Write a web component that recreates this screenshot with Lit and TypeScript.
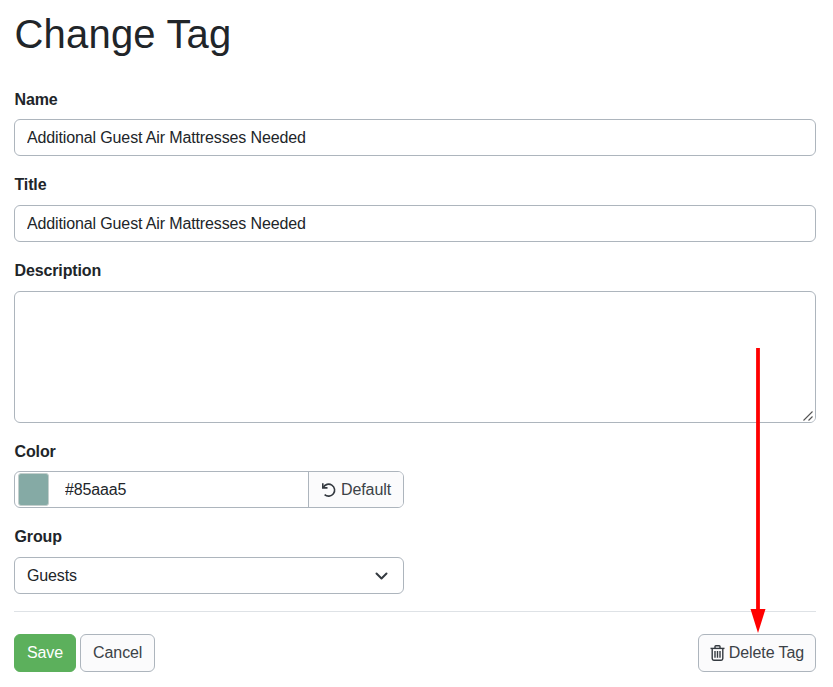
import { LitElement, html, css } from "lit";
import { customElement } from "lit/decorators.js";

@customElement("app-root")
export class AppRoot extends LitElement {
  static styles = css`
    :host {
      display: block;
      position: relative;
      height: 687px;
      overflow: hidden;
      background: #fff;
      font-family: "Liberation Sans", Arial, sans-serif;
      font-size: 16px;
      color: #212529;
    }
    * { box-sizing: border-box; }
    .page {
      width: 802px;
      margin-left: 14px;
      padding-top: 10px;
      display: flex;
      flex-direction: column;
    }
    h1 {
      margin: 0 0 32px;
      padding-left: 0.5px;
      font-size: 40px;
      font-weight: 400;
      line-height: 48px;
      letter-spacing: 0.2px;
    }
    label {
      display: block;
      font-weight: 700;
      line-height: 19px;
      margin-bottom: 10px;
      letter-spacing: -0.13px;
      padding-left: 0.5px;
    }
    label.up {
      margin-top: -1px;
      margin-bottom: 11px;
    }
    .field { margin-bottom: 20px; }
    .field.tall { margin-bottom: 19px; position: relative; }
    .field.small { width: 390px; }
    input, select, textarea {
      display: block;
      width: 100%;
      font: inherit;
      letter-spacing: -0.13px;
      color: #212529;
      background: #fff;
      border: 1px solid #adb5bd;
      border-radius: 6px;
      outline: none;
      margin: 0;
    }
    input.text, select {
      height: 37px;
      padding: 0 12px;
    }
    textarea {
      height: 132px;
      padding: 6px 12px;
      resize: vertical;
    }
    .grip {
      position: absolute;
      right: 1px;
      bottom: 1px;
      width: 13px;
      height: 13px;
      pointer-events: none;
      background: #fff;
      border-radius: 0 0 5px 0;
    }
    .group {
      display: flex;
      height: 37px;
      border: 1px solid #adb5bd;
      border-radius: 6px;
      overflow: hidden;
    }
    .swatch-wrap {
      flex: none;
      width: 38px;
      display: flex;
      align-items: center;
      padding-left: 3px;
    }
    .swatch {
      width: 31px;
      height: 33px;
      border-radius: 3px;
      background: #85aaa5;
      border: 1px solid #c4cfcd;
    }
    .group input {
      flex: 1;
      min-width: 0;
      border: 0;
      border-radius: 0;
      padding: 0 12px;
    }
    .default {
      flex: none;
      width: 95px;
      display: flex;
      align-items: center;
      justify-content: center;
      gap: 4px;
      border-left: 1px solid #adb5bd;
      color: #3c4247;
      background: #fbfbfc;
      letter-spacing: -0.1px;
    }
    .select-wrap { position: relative; }
    select { appearance: none; -webkit-appearance: none; }
    .chev {
      position: absolute;
      right: 16px;
      top: 15px;
      width: 13px;
      height: 8px;
      pointer-events: none;
    }
    hr {
      margin: -3px 0 22px;
      border: 0;
      border-top: 1px solid #dee2e6;
      width: 100%;
    }
    .actions {
      display: flex;
      align-items: center;
      gap: 4px;
    }
    button {
      height: 38px;
      padding: 0 12px;
      font: inherit;
      letter-spacing: -0.1px;
      border-radius: 6px;
      border: 1px solid #adb5bd;
      background: #fbfbfc;
      color: #3c4247;
      display: inline-flex;
      align-items: center;
      gap: 4px;
    }
    button.save {
      background: #5cb05c;
      border-color: #5cb05c;
      color: #fff;
    }
    button.delete { margin-left: auto; padding: 0 11px; }
    .arrow {
      position: absolute;
      left: 745px;
      top: 345px;
      width: 26px;
      height: 290px;
      pointer-events: none;
    }
  `;

  render() {
    return html`
      <div class="page">
        <h1>Change Tag</h1>
        <div class="field">
          <label>Name</label>
          <input class="text" .value=${"Additional Guest Air Mattresses Needed"} />
        </div>
        <div class="field">
          <label class="up">Title</label>
          <input class="text" .value=${"Additional Guest Air Mattresses Needed"} />
        </div>
        <div class="field tall">
          <label class="up">Description</label>
          <textarea></textarea>
          <svg class="grip" viewBox="0 0 13 13" fill="none" stroke="#555" stroke-width="1.1">
            <path d="M1.5 11.5 10.5 2.5M6.5 11.5 10.5 7.5"/>
          </svg>
        </div>
        <div class="field small">
          <label>Color</label>
          <div class="group">
            <div class="swatch-wrap"><div class="swatch"></div></div>
            <input .value=${"#85aaa5"} />
            <div class="default">
              <svg width="16" height="16" viewBox="0 0 16 16" fill="none" stroke="#343a40" stroke-width="1.6">
                <path d="M2.3 5.4A6 6 0 1 1 3.6 12.6"/>
                <path d="M1.8 1.2V5.9H6.5"/>
              </svg>
              Default
            </div>
          </div>
        </div>
        <div class="field small">
          <label class="up">Group</label>
          <div class="select-wrap">
            <select><option>Guests</option></select>
            <svg class="chev" viewBox="0 0 13 8" fill="none" stroke="#343a40" stroke-width="2" stroke-linecap="round" stroke-linejoin="round">
              <path d="M1.5 1.5 6.5 6.5 11.5 1.5"/>
            </svg>
          </div>
        </div>
        <hr />
        <div class="actions">
          <button class="save">Save</button>
          <button>Cancel</button>
          <button class="delete">
            <svg width="15" height="16" viewBox="0 0 15 16" fill="none" stroke="#343a40" stroke-width="1.4">
              <path d="M0.5 3.4H14.5"/>
              <path d="M5 3.4V1.6Q5 .8 5.8 .8H9.2Q10 .8 10 1.6V3.4"/>
              <path d="M2.2 3.4V13.6Q2.2 15.2 3.8 15.2H11.2Q12.8 15.2 12.8 13.6V3.4"/>
              <path d="M5 6V12.8M7.5 6V12.8M10 6V12.8"/>
            </svg>
            Delete Tag
          </button>
        </div>
      </div>
      <svg class="arrow" viewBox="0 0 26 290">
        <path d="M13 3V267" stroke="#ff0000" stroke-width="3.8" fill="none"/>
        <path d="M5.5 264H20.5L13 288Z" fill="#ff0000"/>
      </svg>
    `;
  }
}
